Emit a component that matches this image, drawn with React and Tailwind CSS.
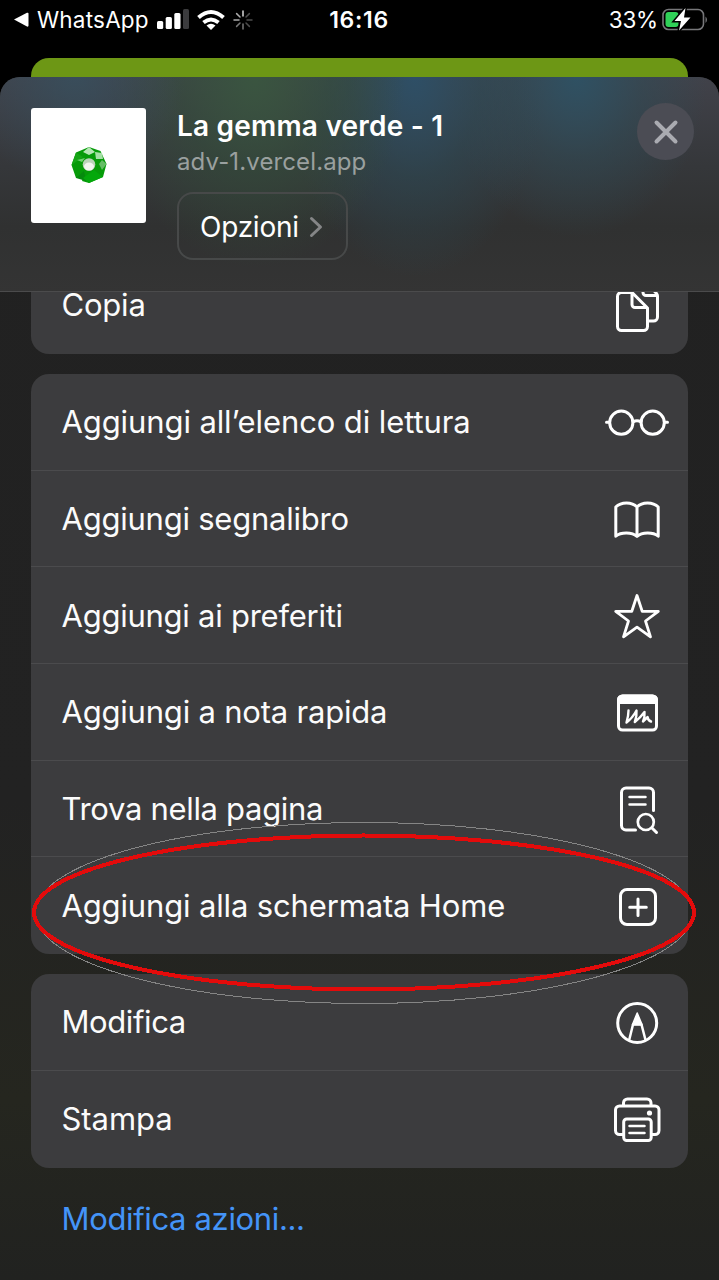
import React from "react";

const line = {
  fill: "none",
  stroke: "currentColor",
  strokeWidth: 3,
  strokeLinecap: "round",
  strokeLinejoin: "round",
};

function Icon({ children }) {
  return (
    <svg viewBox="0 0 72 72" className="h-[72px] w-[72px] shrink-0 text-white" {...line}>
      {children}
    </svg>
  );
}

const icons = {
  copy: (
    <Icon>
      <path d="M30 23.5H20.5a4 4 0 0 0-4 4V57.500a4 4 0 0 0 4 4H42.500a4 4 0 0 0 4-4V39L31 23.500V35.500a3 3 0 0 0 3 3H46" />
      <path d="M42 17V23.500a3 3 0 0 0 3 3H55M51.500 20l4 4.500a4 4 0 0 1 1 3V48a4 4 0 0 1-4 4H48" />
    </Icon>
  ),
  glasses: (
    <Icon>
      <circle cx="20.300" cy="36.700" r="11.600" />
      <circle cx="51.700" cy="36.700" r="11.600" />
      <path d="M32 35.800q4-2 8 0M5.500 36.300H8.500M63.500 36.300H66.500" />
    </Icon>
  ),
  book: (
    <Icon>
      <path d="M36 24C31 18.500 20 18.500 14.800 24V53.200C20 49 31 49 36 53.500C41 49 52 49 57.200 53.200V24C52 18.500 41 18.500 36 24V53" />
    </Icon>
  ),
  star: (
    <Icon>
      <path strokeWidth="2.800" d="M36 15.500L41.200 31.300H57.300L44.500 41L49.500 56.800L36 47.200L22.500 56.800L27.500 41L14.700 31.300H30.800Z" />
    </Icon>
  ),
  note: (
    <Icon>
      <rect x="17.500" y="20" width="38" height="34" rx="4" />
      <path d="M17.500 26.500V24a4 4 0 0 1 4-4H51.500a4 4 0 0 1 4 4V26.500Z" fill="currentColor" />
      <path strokeWidth="2.400" d="M27.500 34.500Q27.500 40 25.500 46.500Q31.500 42 35.500 34.500Q36 40 33.800 46Q39 42 43.500 36Q44 41 42 45.500Q44.500 43.500 46.500 41Q47 44.500 50 45.500" />
    </Icon>
  ),
  find: (
    <Icon>
      <path d="M52.500 37.500V19.500a4.500 4.500 0 0 0-4.500-4.500H25a4.500 4.500 0 0 0-4.500 4.500V52.500a4.500 4.500 0 0 0 4.500 4.500H34.500" />
      <path strokeWidth="2.500" d="M28.500 24H44.500M28.500 31.500H44.500" />
      <circle cx="44.800" cy="49" r="8" strokeWidth="2.700" />
      <path d="M51 55L55.500 59.500" />
    </Icon>
  ),
  add: (
    <Icon>
      <rect x="19.500" y="19.500" width="35" height="35" rx="6.500" />
      <path d="M37 29V45.500M28.700 37.300H45.300" />
    </Icon>
  ),
  markup: (
    <Icon>
      <circle cx="36.200" cy="37" r="19.500" />
      <path strokeWidth="2.500" d="M28.200 54L32 38.500H40.500L44.500 54" />
      <path strokeWidth="1.500" d="M36.200 27L41 38.500H31.500Z" fill="currentColor" />
    </Icon>
  ),
  printer: (
    <Icon>
      <path d="M22.500 22.500V20a4 4 0 0 1 4-4H46a4 4 0 0 1 4 4V22.500M22 51.500H18.500a4 4 0 0 1-4-4V27a4 4 0 0 1 4-4H54a4 4 0 0 1 4 4V47.500a4 4 0 0 1-4 4H51" />
      <rect x="22.700" y="36" width="27.500" height="21.500" rx="3" />
      <path strokeWidth="2.500" d="M28.500 43H43.500M28.500 50H43.500" />
      <circle cx="48.500" cy="30" r="2.600" fill="currentColor" stroke="none" />
    </Icon>
  ),
};

function Row({ label, icon, tracking }) {
  return (
    <div className="flex h-[96.7px] shrink-0 items-center justify-between pl-[30.5px] pr-[15px] shadow-[inset_0_-1px_0_#4b4b4d] last:shadow-none">
      <span className={`-mt-[1px] whitespace-nowrap text-[31px] leading-none text-[#fbfbfb] ${tracking}`}>{label}</span>
      {icons[icon]}
    </div>
  );
}

const pageActions = [
  ["Aggiungi all’elenco di lettura", "glasses", "tracking-[-0.1px]"],
  ["Aggiungi segnalibro", "book", "tracking-[-0.23px]"],
  ["Aggiungi ai preferiti", "star", "tracking-[-0.25px]"],
  ["Aggiungi a nota rapida", "note", "tracking-[-0.2px]"],
  ["Trova nella pagina", "find", "tracking-[-0.31px]"],
  ["Aggiungi alla schermata Home", "add", "tracking-[-0.15px]"],
];

const editActions = [
  ["Modifica", "markup", "tracking-[-0.4px]"],
  ["Stampa", "printer", "tracking-[-0.05px]"],
];

function StatusBar() {
  return (
    <div className="grid h-[58px] grid-cols-3 px-[13px] pt-[6px] text-[22px] leading-[28px] text-white">
      <div className="flex h-[28px] items-center">
        <svg viewBox="0 0 16 16" className="h-4 w-4 shrink-0" fill="currentColor">
          <path d="M1 7.500L14 .8q1.500-.5 1.500 1V13.500q0 1.500-1.500 1Z" />
        </svg>
        <span className="ml-[8px] w-[119px] shrink-0 whitespace-nowrap text-[22.5px] tracking-[0.2px]">WhatsApp</span>
        <svg viewBox="0 0 34 22" className="-mt-[2px] h-[22px] w-[34px] shrink-0" fill="currentColor">
          <rect x="1" y="13" width="6.200" height="8" rx="1.500" />
          <rect x="9.700" y="9" width="6.200" height="12" rx="1.500" />
          <rect x="18.300" y="5" width="6.200" height="16" rx="1.500" />
          <rect x="27" y="1" width="6" height="20" rx="1.500" fill="#3b3b3d" />
        </svg>
        <svg viewBox="0 0 30 24" className="ml-[6px] h-[24px] w-[30px] shrink-0" fill="none" stroke="currentColor" strokeWidth="4">
          <path d="M2.500 9.500Q15-1.500 27.500 9.500M7.500 14.500Q15 8.500 22.500 14.500" />
          <path d="M10.500 17.500Q15 14 19.500 17.500L15 22Z" fill="currentColor" stroke="none" />
        </svg>
        <svg viewBox="0 0 20 20" className="-mt-px ml-[7px] h-5 w-5 shrink-0" fill="none" strokeWidth="1.500" strokeLinecap="round">
          <path d="M10 1V6" stroke="#d8d8d8" />
          <path d="M3.600 3.600L7 7M1 10H6" stroke="#aaa" />
          <path d="M3.600 16.400L7 13M10 14V19" stroke="#777" />
          <path d="M13 13L16.400 16.400M14 10H19M13 7L16.400 3.600" stroke="#4d4d4d" />
        </svg>
      </div>
      <div className="flex justify-center">
        <span className="-ml-px text-[23px] font-semibold tracking-[0.7px]">16:16</span>
      </div>
      <div className="flex h-[28px] items-center justify-end">
        <span className="text-[22.5px] tracking-[-0.2px]">33%</span>
        <svg viewBox="0 0 46 26" className="-mr-[2px] -mt-px ml-[4px] h-[26px] w-[46px] shrink-0">
          <rect x="1" y="2.500" width="40.500" height="20" rx="5.500" fill="none" stroke="#77777a" strokeWidth="1.600" />
          <path d="M43.500 9.500q3 3 0 6.500Z" fill="#77777a" />
          <rect x="3.500" y="5" width="13" height="15" rx="3" fill="#30d158" />
          <path d="M23.500 1L12.500 14H19L17 23.500L28.500 10.500H22Z" fill="#fff" stroke="#000" strokeWidth="3" paintOrder="stroke" />
        </svg>
      </div>
    </div>
  );
}

function Gem() {
  return (
    <svg viewBox="0 0 36 38" className="h-[38px] w-[36px]">
      <path d="M18 1L29.500 5L35.500 18L32 31L18 37L11 35L12 32H5L.5 19L5 6.500Z" fill="#069b09" />
      <path d="M5 6.500L12 11L.5 19Z" fill="#15a516" />
      <path d="M5 32L13 25L15 35Z" fill="#058a0d" />
      <path d="M12 32L18 37L32 31L23 24Z" fill="#04a80b" />
      <path d="M18 1L24 6L18 9L12 6Z" fill="#b5e6b4" />
      <path d="M24 6L31 7L32 13L25 13Z" fill="#a5e0a5" />
      <path d="M35.500 18L31 24L28 18L31 14Z" fill="#65bd65" />
      <path d="M6 14L14 12L11 16Z" fill="#6fd070" />
      <circle cx="18" cy="18.500" r="6.300" fill="#b9d3b8" />
      <ellipse cx="18" cy="20.500" rx="5" ry="4" fill="#f0f5ef" />
    </svg>
  );
}

function SheetHeader() {
  return (
    <header className="flex h-[215px] shrink-0 items-start rounded-t-[20px] border-b border-[#4b4b4c] bg-[radial-gradient(ellipse_110px_110px_at_75px_0px,#37505fcc_0%,#37505f66_50%,#37505f00_100%),radial-gradient(ellipse_150px_190px_at_255px_0px,#3a5540_0%,#33503a88_50%,#33503a00_100%),radial-gradient(ellipse_130px_200px_at_415px_0px,#2e4f66_0%,#2b4a5788_50%,#2b4a5700_100%),radial-gradient(ellipse_130px_160px_at_577px_0px,#2f5163_0%,#2f4c5888_50%,#2f4c5800_100%),linear-gradient(180deg,#41424a_0px,#35373a_90px,#303131_150px,#343434_215px)] pl-[31px] pr-[25px]">
      <div className="mt-[30.5px] flex h-[115px] w-[115px] items-center justify-center rounded-[3px] bg-white">
        <Gem />
      </div>
      <div className="ml-[31px] mt-[33px] flex flex-1 flex-col items-start">
        <h1 className="whitespace-nowrap text-[28px] font-semibold leading-[32px] tracking-[0.2px] text-white">La gemma verde - 1</h1>
        <p className="mt-[4px] whitespace-nowrap text-[24px] leading-[32px] tracking-[0.12px] text-[#9aa09f]">adv-1.vercel.app</p>
        <button className="mt-[14px] flex h-[68px] w-[171px] items-center rounded-[16px] border-2 border-[#474949] pl-[21px] text-[28px] tracking-[-0.25px] text-white">
          <span className="mt-[2px]">Opzioni</span>
          <svg viewBox="0 0 14 22" className="ml-[10px] mt-px h-[22px] w-[14px]" fill="none" stroke="#858687" strokeWidth="3" strokeLinecap="round" strokeLinejoin="round">
            <path d="M2.500 2.500L11.500 11L2.500 19.500" />
          </svg>
        </button>
      </div>
      <button className="mt-[26px] flex h-[57px] w-[57px] items-center justify-center rounded-full bg-[#4b4c54]">
        <svg viewBox="0 0 26 26" className="h-[26px] w-[26px]" fill="none" stroke="#aaabb1" strokeWidth="4" strokeLinecap="round">
          <path d="M3.500 3.500L22.500 22.500M22.500 3.500L3.500 22.500" />
        </svg>
      </button>
    </header>
  );
}

export default function App() {
  return (
    <div className="relative flex h-[1280px] w-[719px] flex-col overflow-hidden bg-black font-['Inter','Liberation_Sans',sans-serif]">
      <StatusBar />
      <div className="mx-[31px] -mb-[20px] h-[39px] shrink-0 rounded-t-[18px] bg-[#6d9715]" />
      <div className="relative flex flex-1 flex-col rounded-t-[20px] bg-[linear-gradient(180deg,#212121_0%,#222222_60%,#25261f_85%,#212220_100%)]">
        <SheetHeader />
        <main className="flex flex-col px-[31px]">
          <section className="flex h-[61.5px] flex-col justify-end overflow-hidden rounded-b-[18px] bg-[#3c3c3e]">
            <Row label="Copia" icon="copy" tracking="tracking-[-0.2px]" />
          </section>
          <section className="mt-[20.500px] overflow-hidden rounded-[18px] bg-[#3c3c3e]">
            {pageActions.map(([label, icon, tracking]) => (
              <Row key={label} label={label} icon={icon} tracking={tracking} />
            ))}
          </section>
          <section className="mt-[20px] overflow-hidden rounded-[18px] bg-[#3c3c3e]">
            {editActions.map(([label, icon, tracking]) => (
              <Row key={label} label={label} icon={icon} tracking={tracking} />
            ))}
          </section>
          <a className="ml-[30.5px] mt-[33px] self-start whitespace-nowrap text-[31px] leading-[36px] tracking-[-0.35px] text-[#4494f8]">Modifica azioni...</a>
        </main>
      </div>
      <svg viewBox="0 0 719 200" className="pointer-events-none absolute left-0 top-[812px] h-[200px] w-[719px]" fill="none" shapeRendering="crispEdges">
        <ellipse cx="364" cy="101" rx="329" ry="90.500" stroke="#858585" strokeWidth="1" />
        <ellipse cx="364" cy="100.500" rx="330" ry="77" stroke="#e30b0b" strokeWidth="4" />
      </svg>
    </div>
  );
}
